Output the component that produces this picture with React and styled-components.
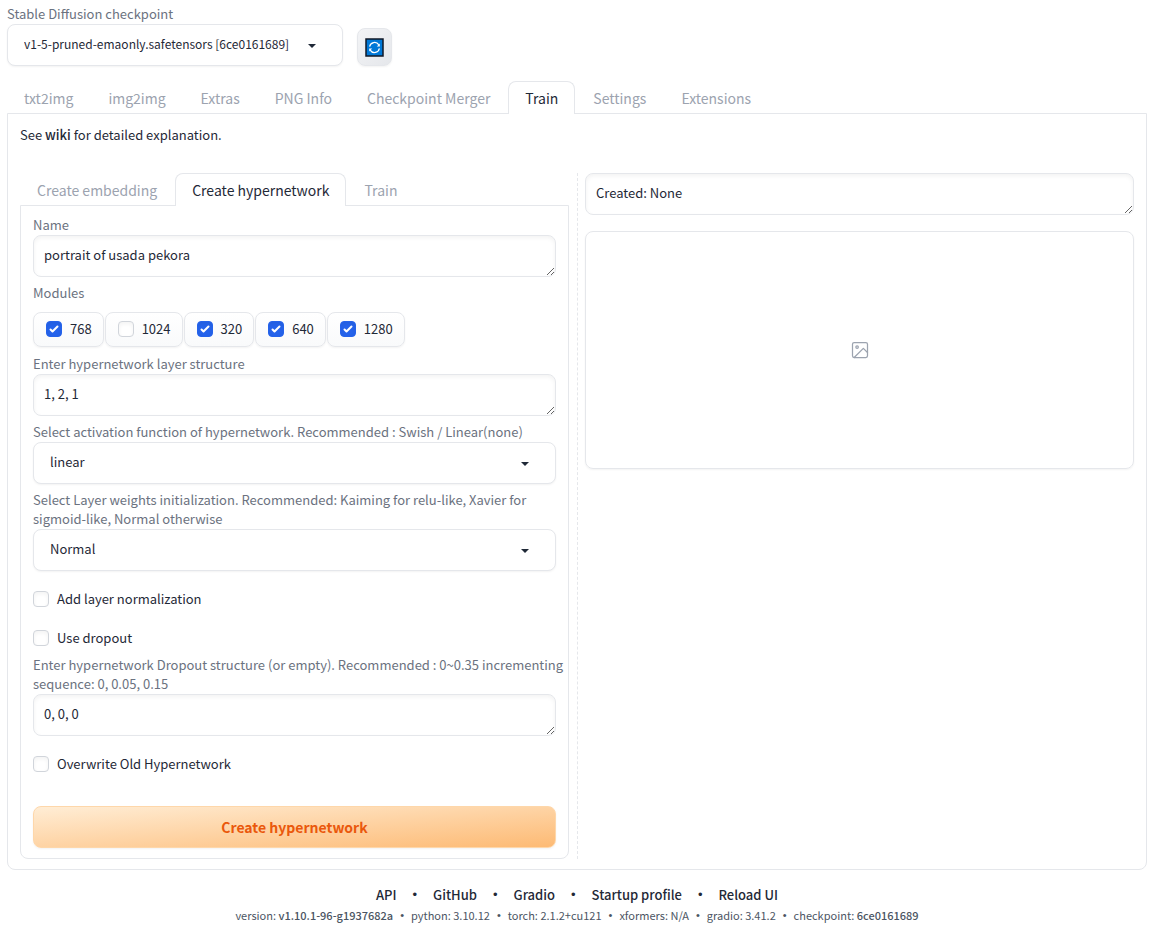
import { useState } from "react";
import styled, { createGlobalStyle } from "styled-components";

const GlobalStyle = createGlobalStyle`
  * {
    box-sizing: border-box;
  }

  body {
    margin: 0;
    background: #ffffff;
    color: #1f2937;
    font-family: "Source Sans Pro", "Noto Sans CJK SC", "Noto Sans", sans-serif;
    font-size: 13px;
    line-height: 20px;
  }

  button,
  select,
  textarea {
    font: inherit;
    color: inherit;
  }
`;

const Page = styled.div`
  padding: 4px 3px 0 7px;
`;

const QuickSettings = styled.header`
  display: flex;
  align-items: flex-end;
  gap: 14px;
`;

const CheckpointField = styled.div`
  width: 336px;
`;

const FieldLabel = styled.label`
  display: block;
  margin-right: -12px;
  padding-bottom: 1px;
  color: #6b7280;
  line-height: 19px;
`;

const SelectWrapper = styled.div`
  position: relative;
`;

const StyledSelect = styled.select`
  display: block;
  width: 100%;
  height: 42px;
  padding: 0 36px 2px 16px;
  appearance: none;
  background: #ffffff;
  border: 1px solid #e5e7eb;
  border-radius: 8px;
  box-shadow: 0 1px 2px rgba(0, 0, 0, 0.05);
  font-size: ${({ $small }) => ($small ? "12px" : "13px")};
`;

const Caret = styled.svg`
  position: absolute;
  top: 12px;
  right: 22px;
  pointer-events: none;
`;

const RefreshButton = styled.button`
  display: flex;
  align-items: center;
  justify-content: center;
  width: 35px;
  height: 38px;
  padding: 0;
  border: 1px solid #e5e7eb;
  border-radius: 8px;
  background: linear-gradient(to bottom right, #f3f4f6, #e5e7eb);
  box-shadow: 0 1px 2px rgba(0, 0, 0, 0.05);
`;

const TabList = styled.nav`
  display: flex;
  gap: 1px;
  margin-bottom: -1px;
`;

const MainTabs = styled(TabList)`
  margin-top: 15px;
`;

const Tab = styled.button`
  height: 33px;
  padding: 0 16px;
  border: 1px solid ${({ $active }) => ($active ? "#e5e7eb" : "transparent")};
  border-bottom: none;
  border-radius: 8px 8px 0 0;
  background: ${({ $active }) => ($active ? "#ffffff" : "transparent")};
  color: ${({ $active }) => ($active ? "#1f2937" : "#9ca3af")};
  font-size: 14px;
  line-height: 24px;
`;

const Panel = styled.section`
  padding: 9px 12px 10px;
  border: 1px solid #e5e7eb;
  border-radius: 0 0 8px 8px;
`;

const Hint = styled.p`
  margin: 2px 0 28px;

  a {
    color: inherit;
    font-weight: 500;
    text-decoration: none;
  }
`;

const Columns = styled.div`
  display: grid;
  grid-template-columns: minmax(0, 1fr) 16px minmax(0, 1fr);
`;

const Divider = styled.div`
  margin-left: 8px;
  border-left: 1px dashed #e5e7eb;
`;

const Form = styled.form`
  display: flex;
  flex-direction: column;
  gap: 6px;
`;

const TextBox = styled.textarea`
  display: block;
  width: 100%;
  height: 42px;
  padding: 9px 10px;
  border: 1px solid #e5e7eb;
  border-radius: 8px;
  background: #ffffff;
  box-shadow: inset 0 2px 4px rgba(0, 0, 0, 0.05);
  overflow: hidden;
  resize: vertical;
`;

const Modules = styled.fieldset`
  min-width: 0;
  margin: 0;
  padding: 0;
  border: none;
`;

const Legend = styled.legend`
  padding: 0;
  color: #6b7280;
  line-height: 19px;
`;

const ModuleList = styled.div`
  display: flex;
  flex-wrap: wrap;
  gap: 1px;
  padding: 10px 0 1px;
`;

const ModuleOption = styled.label`
  display: flex;
  align-items: center;
  gap: 8px;
  height: 35px;
  padding: 0 11px 1px 12px;
  border: 1px solid #e5e7eb;
  border-radius: 8px;
  background: linear-gradient(to bottom, #ffffff, #f9fafb);
  box-shadow: 0 1px 2px rgba(0, 0, 0, 0.05);
`;

const CheckMark = `url("data:image/svg+xml,%3Csvg viewBox='0 0 16 16' fill='white' xmlns='http://www.w3.org/2000/svg'%3E%3Cpath d='M12.207 4.793a1 1 0 010 1.414l-5 5a1 1 0 01-1.414 0l-2-2a1 1 0 011.414-1.414L6.5 9.086l4.293-4.293a1 1 0 011.414 0z'/%3E%3C/svg%3E")`;

const Checkbox = styled.input.attrs({ type: "checkbox" })`
  flex: none;
  width: 16px;
  height: 16px;
  margin: 0;
  appearance: none;
  border: 1px solid #d1d5db;
  border-radius: 4px;
  background-color: #ffffff;
  box-shadow: inset 0 2px 4px rgba(0, 0, 0, 0.05);

  &:checked {
    border-color: #2563eb;
    background-color: #2563eb;
    background-image: ${CheckMark};
    background-origin: border-box;
  }
`;

const CheckRow = styled.label`
  display: flex;
  align-items: center;
  gap: 8px;
  padding: 12px 0 1px;
`;

const SubmitButton = styled.button`
  height: 42px;
  margin-top: 25px;
  border: 1px solid #fed7aa;
  border-radius: 8px;
  background: linear-gradient(to bottom right, #ffedd5, #fdba74);
  box-shadow: 0 1px 2px rgba(0, 0, 0, 0.05);
  color: #ea580c;
  font-size: 14px;
  font-weight: 600;
`;

const Output = styled.div`
  display: flex;
  flex-direction: column;
  gap: 16px;
`;

const Gallery = styled.div`
  display: flex;
  align-items: center;
  justify-content: center;
  height: 238px;
  border: 1px solid #e5e7eb;
  border-radius: 8px;
  box-shadow: 0 1px 2px rgba(0, 0, 0, 0.05);
  color: #9ca3af;
`;

const Footer = styled.footer`
  padding-top: 15px;
  text-align: center;
`;

const FooterLinks = styled.div`
  display: flex;
  justify-content: center;
  gap: 16px;

  a {
    color: inherit;
    font-weight: 500;
    text-decoration: none;
  }
`;

const Versions = styled.div`
  display: flex;
  justify-content: center;
  gap: 7px;
  color: #4b5563;
  font-size: 11px;

  b {
    font-weight: 500;
  }
`;

const Dot = styled.span`
  font-family: "Liberation Sans", sans-serif;
`;

const tabs = [
  "txt2img",
  "img2img",
  "Extras",
  "PNG Info",
  "Checkpoint Merger",
  "Train",
  "Settings",
  "Extensions",
];

const trainTabs = ["Create embedding", "Create hypernetwork", "Train"];

const modules = [
  { name: "768", checked: true },
  { name: "1024", checked: false },
  { name: "320", checked: true },
  { name: "640", checked: true },
  { name: "1280", checked: true },
];

const links = ["API", "GitHub", "Gradio", "Startup profile", "Reload UI"];

const versions = [
  { name: "version", value: "v1.10.1-96-g1937682a", strong: true },
  { name: "python", value: "3.10.12" },
  { name: "torch", value: "2.1.2+cu121" },
  { name: "xformers", value: "N/A" },
  { name: "gradio", value: "3.41.2" },
  { name: "checkpoint", value: "6ce0161689", strong: true },
];

function Dropdown({ id, options, small }) {
  return (
    <SelectWrapper>
      <StyledSelect id={id} $small={small}>
        {options.map((option) => (
          <option key={option}>{option}</option>
        ))}
      </StyledSelect>
      <Caret width="18" height="18" viewBox="0 0 18 18" fill="#1f2937">
        <path d="M5 8l4 4 4-4z" />
      </Caret>
    </SelectWrapper>
  );
}

function TextField({ id, label, value }) {
  return (
    <div>
      <FieldLabel htmlFor={id}>{label}</FieldLabel>
      <TextBox id={id} rows={1} defaultValue={value} />
    </div>
  );
}

function SelectField({ id, label, options }) {
  return (
    <div>
      <FieldLabel htmlFor={id}>{label}</FieldLabel>
      <Dropdown id={id} options={options} />
    </div>
  );
}

function RefreshIcon() {
  return (
    <svg width="19" height="19" viewBox="0 0 19 19" fill="none">
      <rect x="1" y="1" width="17" height="17" fill="#0078d7" stroke="#111827" strokeWidth="1.5" />
      <g stroke="#ffffff" strokeWidth="1.2">
        <path d="M4.6 8.6a5 5 0 0 1 9.2-1.7" />
        <path d="M14.4 10.4a5 5 0 0 1-9.2 1.7" />
      </g>
      <path d="M14.8 5.6v3h-3z" fill="#ffffff" />
      <path d="M4.2 13.4v-3h3z" fill="#ffffff" />
    </svg>
  );
}

function ImageIcon() {
  return (
    <svg
      width="20"
      height="20"
      viewBox="0 0 24 24"
      fill="none"
      stroke="currentColor"
      strokeWidth="1.5"
      strokeLinecap="round"
      strokeLinejoin="round"
    >
      <rect x="3" y="3" width="18" height="18" rx="2" ry="2" />
      <circle cx="8.5" cy="8.5" r="1.5" />
      <polyline points="21 15 16 10 5 21" />
    </svg>
  );
}

export default function App() {
  const [tab, setTab] = useState("Train");
  const [trainTab, setTrainTab] = useState("Create hypernetwork");

  return (
    <>
      <GlobalStyle />
      <Page>
        <QuickSettings>
          <CheckpointField>
            <FieldLabel htmlFor="checkpoint">Stable Diffusion checkpoint</FieldLabel>
            <Dropdown
              id="checkpoint"
              options={["v1-5-pruned-emaonly.safetensors [6ce0161689]"]}
              small
            />
          </CheckpointField>
          <RefreshButton type="button" aria-label="Refresh">
            <RefreshIcon />
          </RefreshButton>
        </QuickSettings>

        <MainTabs>
          {tabs.map((name) => (
            <Tab key={name} type="button" $active={name === tab} onClick={() => setTab(name)}>
              {name}
            </Tab>
          ))}
        </MainTabs>
        <Panel>
          <Hint>
            See <a href="#wiki">wiki</a> for detailed explanation.
          </Hint>
          <Columns>
            <div>
              <TabList>
                {trainTabs.map((name) => (
                  <Tab
                    key={name}
                    type="button"
                    $active={name === trainTab}
                    onClick={() => setTrainTab(name)}
                  >
                    {name}
                  </Tab>
                ))}
              </TabList>
              <Panel>
                <Form onSubmit={(e) => e.preventDefault()}>
                  <TextField id="name" label="Name" value="portrait of usada pekora" />
                  <Modules>
                    <Legend>Modules</Legend>
                    <ModuleList>
                      {modules.map(({ name, checked }) => (
                        <ModuleOption key={name}>
                          <Checkbox defaultChecked={checked} />
                          {name}
                        </ModuleOption>
                      ))}
                    </ModuleList>
                  </Modules>
                  <TextField
                    id="structure"
                    label="Enter hypernetwork layer structure"
                    value="1, 2, 1"
                  />
                  <SelectField
                    id="activation"
                    label="Select activation function of hypernetwork. Recommended : Swish / Linear(none)"
                    options={["linear", "relu", "swish"]}
                  />
                  <SelectField
                    id="weights"
                    label="Select Layer weights initialization. Recommended: Kaiming for relu-like, Xavier for sigmoid-like, Normal otherwise"
                    options={["Normal", "KaimingNormal", "XavierNormal"]}
                  />
                  <CheckRow>
                    <Checkbox />
                    Add layer normalization
                  </CheckRow>
                  <CheckRow>
                    <Checkbox />
                    Use dropout
                  </CheckRow>
                  <TextField
                    id="dropout"
                    label="Enter hypernetwork Dropout structure (or empty). Recommended : 0~0.35 incrementing sequence: 0, 0.05, 0.15"
                    value="0, 0, 0"
                  />
                  <CheckRow>
                    <Checkbox />
                    Overwrite Old Hypernetwork
                  </CheckRow>
                  <SubmitButton type="submit">Create hypernetwork</SubmitButton>
                </Form>
              </Panel>
            </div>
            <Divider />
            <Output>
              <TextBox rows={1} aria-label="Result" readOnly value="Created: None" />
              <Gallery>
                <ImageIcon />
              </Gallery>
            </Output>
          </Columns>
        </Panel>

        <Footer>
          <FooterLinks>
            {links.map((name, i) => [
              i > 0 && <Dot key={`${name}-dot`}>•</Dot>,
              <a key={name} href={`#${name}`}>
                {name}
              </a>,
            ])}
          </FooterLinks>
          <Versions>
            {versions.map(({ name, value, strong }, i) => [
              i > 0 && <Dot key={`${name}-dot`}>•</Dot>,
              <span key={name}>
                {name}: {strong ? <b>{value}</b> : value}
              </span>,
            ])}
          </Versions>
        </Footer>
      </Page>
    </>
  );
}
